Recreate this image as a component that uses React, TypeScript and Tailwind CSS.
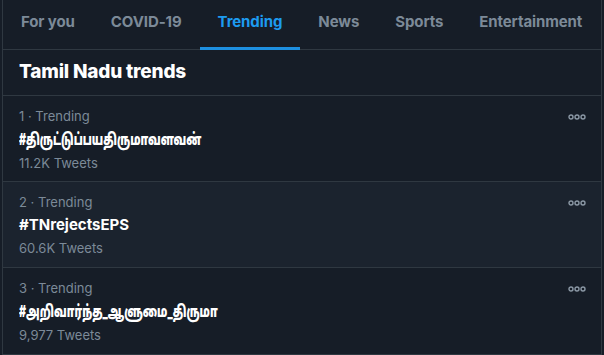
import React from "react";

const tabs = ["For you", "COVID-19", "Trending", "News", "Sports", "Entertainment"];

const trends = [
  { n: 1, tag: "#திருட்டுப்பயதிருமாவளவன்", count: "11.2K Tweets", hover: false, tamil: true },
  { n: 2, tag: "#TNrejectsEPS", count: "60.6K Tweets", hover: true, tamil: false },
  { n: 3, tag: "#அறிவார்ந்த_ஆளுமை_திருமா", count: "9,977 Tweets", hover: false, tamil: true },
];

function Dots() {
  return (
    <svg width="18" height="6" viewBox="0 0 18 6" className="text-[#8b98a5]">
      <circle cx="3" cy="3" r="2" fill="none" stroke="currentColor" strokeWidth="1.4" />
      <circle cx="9" cy="3" r="2" fill="none" stroke="currentColor" strokeWidth="1.4" />
      <circle cx="15" cy="3" r="2" fill="none" stroke="currentColor" strokeWidth="1.4" />
    </svg>
  );
}

export default function App() {
  return (
    <div
      className="w-[604px] h-[355px] bg-[#161d27] overflow-hidden"
      style={{ fontFamily: "Inter, 'Noto Sans', 'Noto Sans Tamil', sans-serif" }}
    >
      <div className="ml-[2px] w-[600px] border-x border-b border-[#2f3841]">
        <div className="flex h-[50px] border-b border-[#2f3841]">
          {tabs.map((t) => (
            <div
              key={t}
              className={
                "relative px-[18px] flex items-center pb-[5px] text-[15px] font-bold tracking-[-0.1px] " +
                (t === "Trending" ? "text-[#1d9bf0]" : "text-[#7c8a98]")
              }
            >
              {t}
              {t === "Trending" && (
                <div className="absolute left-0 right-0 bottom-[-1px] h-[3px] bg-[#1d8fe0]" />
              )}
            </div>
          ))}
        </div>
        <div className="h-[46px] flex items-center px-[16px] border-b border-[#2f3841]">
          <span className="text-[19px] font-extrabold text-white tracking-[-0.2px]">Tamil Nadu trends</span>
        </div>
        {trends.map((r, i) => (
          <div
            key={r.n}
            className={
              "relative h-[86px] px-[16px] pt-[10px] " +
              (i < trends.length - 1 ? "border-b border-[#2f3841] " : "") +
              (r.hover ? "bg-[#1b232e]" : "")
            }
          >
            <div className="text-[13px] leading-[20px] text-[#7c8a98]">{r.n} · Trending</div>
            <div className="text-[15px] leading-[22px] font-bold text-white mt-[2px] whitespace-nowrap">
              {r.tamil ? (
                <span className="inline-block origin-left scale-x-[0.645] text-[16.5px] font-black">{r.tag}</span>
              ) : (
                r.tag
              )}
            </div>
            <div className="text-[13px] leading-[20px] text-[#7c8a98] mt-[2px]">{r.count}</div>
            <div className="absolute right-[15px] top-[18px]">
              <Dots />
            </div>
          </div>
        ))}
      </div>
    </div>
  );
}
